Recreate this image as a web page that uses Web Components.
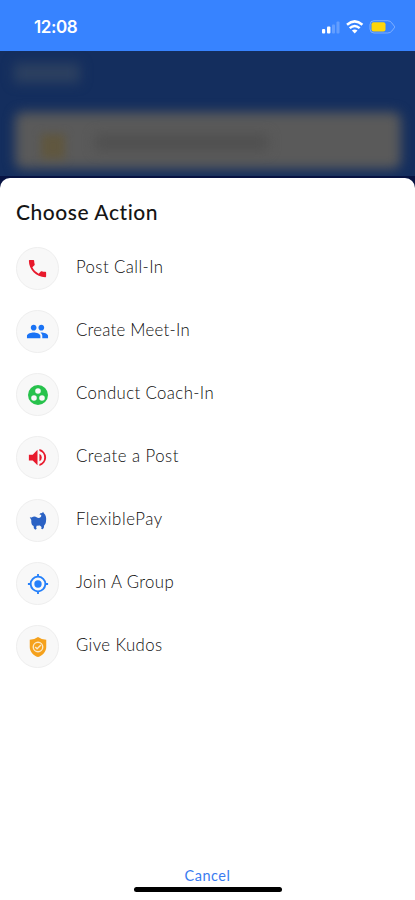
<!DOCTYPE html>
<html lang="en">
<head>
<meta charset="utf-8">
<title>Choose Action</title>
<style>
html,body{margin:0;height:100%;overflow:hidden;background:#142e5e}
body{font-family:Lato,"Open Sans",sans-serif}
</style>
</head>
<body>
<phone-screen>
  <status-bar slot="status" time="12:08"></status-bar>
  <dimmed-feed slot="behind"></dimmed-feed>
  <action-sheet heading="Choose Action">
    <action-row icon="phone" tone="#e8192c" size="23" track=".42px">Post Call-In</action-row>
    <action-row icon="people" tone="#1a73f5" size="23" track=".27px">Create Meet-In</action-row>
    <action-row icon="circles" tone="#27c24c" size="24" track=".4px">Conduct Coach-In</action-row>
    <action-row icon="speaker" tone="#e8192c" size="23" track=".5px">Create a Post</action-row>
    <action-row icon="llama" tone="#2b62c4" size="22" track=".58px">FlexiblePay</action-row>
    <action-row icon="target" tone="#2580fa" size="22" track=".4px">Join A Group</action-row>
    <action-row icon="shield" tone="#f5a11c" size="22" track=".4px">Give Kudos</action-row>
    <span slot="cancel">Cancel</span>
  </action-sheet>
</phone-screen>
<script>
const icons = {
  phone: '<path d="M6.620 10.790c1.440 2.830 3.760 5.140 6.590 6.590l2.200-2.200c.270-.270.670-.360 1.020-.240 1.120.370 2.330.570 3.570.570.550 0 1 .450 1 1V20c0 .550-.450 1-1 1C10.610 21 3 13.390 3 4c0-.550.450-1 1-1h3.500c.550 0 1 .450 1 1 0 1.250.200 2.450.570 3.570.110.350.030.740-.250 1.020z"/>',
  people: '<path d="M16 11c1.660 0 2.990-1.340 2.990-3S17.660 5 16 5s-3 1.340-3 3 1.340 3 3 3zm-8 0c1.660 0 2.990-1.340 2.990-3S9.660 5 8 5 5 6.340 5 8s1.340 3 3 3zm0 2c-2.330 0-7 1.170-7 3.500V19h14v-2.500c0-2.330-4.670-3.500-7-3.500zm8 0c-.290 0-.620.020-.970.050C16.190 13.890 17 15.020 17 16.500V19h6v-2.500c0-2.330-4.670-3.500-7-3.500z"/>',
  circles: '<path fill-rule="evenodd" d="M12 2a10 10 0 1 0 0 20 10 10 0 0 0 0-20zM8 17.800a2.800 2.800 0 1 1 0-5.600 2.800 2.800 0 0 1 0 5.600zM9.200 8a2.800 2.800 0 1 1 5.600 0 2.800 2.800 0 0 1-5.600 0zM16 17.800a2.800 2.800 0 1 1 0-5.600 2.800 2.800 0 0 1 0 5.600z"/>',
  speaker: '<path d="M3 9v6h4l5 5V4L7 9H3zm13.500 3A4.500 4.500 0 0 0 14 7.970v8.050A4.470 4.470 0 0 0 16.500 12zM14 3.230v2.060a7 7 0 0 1 0 13.420v2.060a9 9 0 0 0 0-17.540z"/>',
  llama: '<path d="M3 8 5 8.300C7 6.900 9 6.900 10.500 8 12 9 14 8.800 15 7.700 15.700 6.900 15.700 6 15.300 5.300L13.600 5.200 14.500 3.500 16.500 3.200 17.500 1.800 18.400 3.500C20.700 5.500 21.400 9 20.700 12.500 20.500 15 19.500 15.800 18.700 17L18.300 19.500 17 21 15.500 20.500 15.900 18.500 14 17 10.500 17.300 10 19 10.600 20.500 9 21.500 7.500 20 7.200 17.500C4.500 16.500 4.600 13 4.700 11z"/>',
  target: '<path d="M12 8a4 4 0 1 0 0 8 4 4 0 0 0 0-8zm8.940 3A9 9 0 0 0 13 3.060V1h-2v2.060A9 9 0 0 0 3.060 11H1v2h2.060A9 9 0 0 0 11 20.940V23h2v-2.060A9 9 0 0 0 20.940 13H23v-2h-2.060zM12 19a7 7 0 1 1 0-14 7 7 0 0 1 0 14z"/>',
  shield: '<path d="M12 1Q16 4 21 4V12c0 5.200-3.900 9.300-9 11-5.100-1.700-9-5.800-9-11V4Q8 4 12 1z"/><circle cx="12" cy="12" r="5.200" fill="none" stroke="#fbe8c8" stroke-width="1.500"/><path d="m9 12 2 2 4.200-4.200" fill="none" stroke="#fbe8c8" stroke-width="1.600"/>'
};
function define(name, render) {
  customElements.define(name, class extends HTMLElement {
    connectedCallback() {
      if (!this.shadowRoot) this.attachShadow({mode: 'open'}).innerHTML = render(this);
    }
  });
}
define('phone-screen', () => `
<style>
:host{display:grid;grid-template-rows:51px 127px 1fr;width:415px;height:900px;overflow:hidden;background:linear-gradient(#071342,#071342) 0 178px/100% 12px no-repeat #142e5e}
</style><slot name="status"></slot><slot name="behind"></slot><slot></slot>`);

define('status-bar', el => `
<style>
:host{display:flex;align-items:center;justify-content:space-between;box-sizing:border-box;padding:3px 19px 0 34px;background:#3783ff;color:#fff;font:600 17px/20px Inter,sans-serif}
time{letter-spacing:-.4px}
svg{display:block}
</style><time>${el.getAttribute('time')}</time>
<svg width="76" height="16" viewBox="320 19 76 16">
<g fill="#fff"><rect x="322" y="29" width="3.200" height="4.500" rx="1"/><rect x="327" y="26.500" width="3.400" height="7" rx="1"/>
<g opacity=".22"><rect x="332" y="24.500" width="3" height="9" rx="1"/><rect x="336.500" y="21.500" width="3" height="12" rx="1"/></g></g>
<g fill="none" stroke="#fff" stroke-width="2.500"><path d="M347 24.700q7.700-6.600 15.400 0"/><path d="M349.700 28.100q5-4.300 10 0"/></g>
<path d="m351.900 30.500q2.800-2.200 5.600 0l-2.800 2.900z" fill="#fff"/>
<path d="M374 20.700h13.500q3 0 4.400 2.300l2.500 3.300q.500.700 0 1.400l-2.500 3.300q-1.400 2-4.400 2H374q-4 0-4-4v-4.300q0-4 4-4z" fill="none" stroke="#fff" stroke-opacity=".35"/>
<rect x="371.500" y="22.200" width="14" height="9.300" rx="2" fill="#ffd60a"/></svg>`);

define('dimmed-feed', () => `
<style>
:host{display:block;position:relative;background:#142e5e;overflow:hidden}
i{position:absolute;display:block}
.title{left:14px;top:12px;width:66px;height:20px;background:#2c4060;filter:blur(6px)}
.card{left:15px;top:61px;width:386px;height:57px;border-radius:8px;background:#5a5a5a;filter:blur(6px)}
.badge{left:41px;top:83px;width:24px;height:25px;background:#60573f;filter:blur(4px)}
.line{left:95px;top:83px;width:173px;height:17px;background:#505050;filter:blur(6px)}
.edge{left:0;right:0;bottom:0;height:2px;background:#071342;filter:blur(.5px)}
</style><i class="title"></i><i class="card"></i><i class="badge"></i><i class="line"></i><i class="edge"></i>`);

define('action-sheet', el => `
<style>
:host{display:flex;flex-direction:column;align-items:stretch;box-sizing:border-box;padding:22px 16px 0;background:#fff;border-radius:10px 10px 0 0;color:#151515}
h1{margin:0 0 23px;font:500 21px/24px Lato,sans-serif;letter-spacing:.55px}
.rows{display:flex;flex-direction:column;gap:20px}
footer{margin-top:auto;display:flex;flex-direction:column;align-items:center;color:#3a7cf0;font-size:14.500px;line-height:20px;letter-spacing:.5px;padding-bottom:8px}
.home{width:148px;height:5px;border-radius:3px;background:#000;margin-top:1px}
</style><h1>${el.getAttribute('heading')}</h1><div class="rows"><slot></slot></div>
<footer><slot name="cancel"></slot><div class="home"></div></footer>`);

define('action-row', el => `
<style>
:host{display:flex;align-items:center;gap:17px;height:43px;font:300 16.750px/20px Lato,sans-serif;color:#0c0c0c}
.disc{display:grid;place-items:center;box-sizing:border-box;width:43px;height:43px;border-radius:50%;background:#f8f8f8;border:1px solid #eee}
svg{display:block;fill:${el.getAttribute('tone')}}
.label{letter-spacing:${el.getAttribute('track')};padding-bottom:3px}
</style><div class="disc"><svg width="${el.getAttribute('size')}" height="${el.getAttribute('size')}" viewBox="0 0 24 24">${icons[el.getAttribute('icon')]}</svg></div><span class="label"><slot></slot></span>`);
</script>
</body>
</html>
